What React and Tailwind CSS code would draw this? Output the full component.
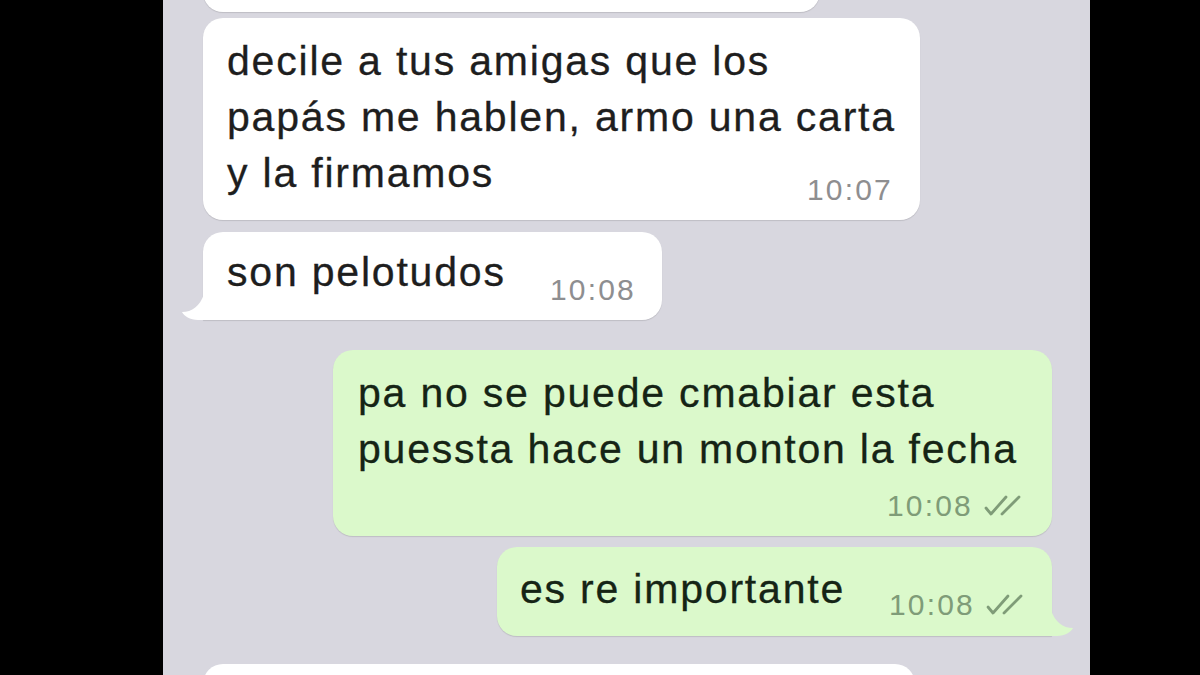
import React from "react";

const font = { fontFamily: '"Liberation Sans", Arial, sans-serif' };

function Checks() {
  return (
    <svg width="42" height="24" viewBox="0 0 42 24" fill="none" className="ml-[10px]">
      <path d="M3 14 L8 20 L23 3" stroke="#7f9c78" strokeWidth="2.8" strokeLinecap="round" strokeLinejoin="round" />
      <path d="M19 20 L36 3" stroke="#7f9c78" strokeWidth="2.8" strokeLinecap="round" />
    </svg>
  );
}

function TailLeft() {
  return (
    <svg className="absolute left-[-21px] bottom-0" width="40" height="26" viewBox="0 0 40 26">
      <path d="M40 0 L40 26 L16 26 C8 26 2 22 0 18 C10 18 18 12 22 0 Z" fill="#ffffff" />
    </svg>
  );
}

function TailRight() {
  return (
    <svg className="absolute right-[-21px] bottom-0" width="40" height="26" viewBox="0 0 40 26">
      <path d="M0 0 L0 26 L24 26 C32 26 38 22 40 18 C30 18 22 12 18 0 Z" fill="#dbf9cb" />
    </svg>
  );
}

export default function App() {
  return (
    <div className="w-[1200px] h-[675px] bg-black flex overflow-hidden" style={font}>
      <div className="ml-[163px] w-[927px] h-[675px] bg-[#d8d7df] overflow-hidden flex flex-col">
        {/* partial top bubble */}
        <div className="ml-[40px] w-[617px] h-[60px] -mt-[48px] bg-white rounded-[20px] shadow-[0_1px_1px_rgba(0,0,0,0.12)] shrink-0" />

        {/* bubble 1 */}
        <div className="ml-[40px] mt-[6px] w-[717px] bg-white rounded-[20px] shadow-[0_1px_1px_rgba(0,0,0,0.12)] pl-[24px] pr-[27px] pt-[15px] pb-[12px] flex flex-col shrink-0">
          <div className="text-[41px] leading-[56px] tracking-[1.8px] text-[#1e1e1e] [-webkit-text-stroke:0.3px_#1e1e1e] whitespace-nowrap">
            decile a tus amigas que los
            <br />
            papás me hablen, armo una carta
            <br />y la firmamos
          </div>
          <div className="self-end -mt-[29px] text-[30px] leading-[36px] tracking-[2.2px] text-[#8e8e90]">10:07</div>
        </div>

        {/* bubble 2 */}
        <div className="relative ml-[40px] mt-[12px] w-[459px] bg-white rounded-[20px] rounded-bl-none shadow-[0_1px_1px_rgba(0,0,0,0.12)] pl-[24px] pr-[26px] pt-[12px] pb-[12px] flex items-end justify-between shrink-0">
          <TailLeft />
          <span className="relative mb-[8px] text-[41px] leading-[56px] tracking-[1.8px] text-[#1e1e1e] [-webkit-text-stroke:0.3px_#1e1e1e] whitespace-nowrap">son pelotudos</span>
          <span className="relative text-[30px] leading-[36px] tracking-[2.2px] text-[#8e8e90]">10:08</span>
        </div>

        {/* bubble 3 green */}
        <div className="self-end mr-[38px] mt-[30px] w-[719px] bg-[#dbf9cb] rounded-[20px] shadow-[0_1px_1px_rgba(0,0,0,0.12)] pl-[25px] pr-[27px] pt-[15px] pb-[12px] flex flex-col shrink-0">
          <div className="text-[41px] leading-[56px] tracking-[1.8px] text-[#152415] [-webkit-text-stroke:0.3px_#152415] whitespace-nowrap">
            pa no se puede cmabiar esta
            <br />
            puessta hace un monton la fecha
          </div>
          <div className="self-end mt-[11px] flex items-center text-[30px] leading-[36px] tracking-[2.2px] text-[#7f9c78]">
            <span>10:08</span>
            <Checks />
          </div>
        </div>

        {/* bubble 4 green */}
        <div className="relative self-end mr-[38px] mt-[11px] w-[555px] bg-[#dbf9cb] rounded-[20px] rounded-br-none shadow-[0_1px_1px_rgba(0,0,0,0.12)] pl-[23px] pr-[25px] pt-[14px] pb-[13px] flex items-end justify-between shrink-0">
          <TailRight />
          <span className="relative mb-[6px] text-[41px] leading-[56px] tracking-[1.8px] text-[#152415] [-webkit-text-stroke:0.3px_#152415] whitespace-nowrap">es re importante</span>
          <span className="relative flex items-center text-[30px] leading-[36px] tracking-[2.2px] text-[#7f9c78]">
            <span>10:08</span>
            <Checks />
          </span>
        </div>

        {/* bottom partial bubble */}
        <div className="ml-[40px] mt-[28px] w-[712px] h-[60px] bg-white rounded-[20px] shrink-0" />
      </div>
    </div>
  );
}
